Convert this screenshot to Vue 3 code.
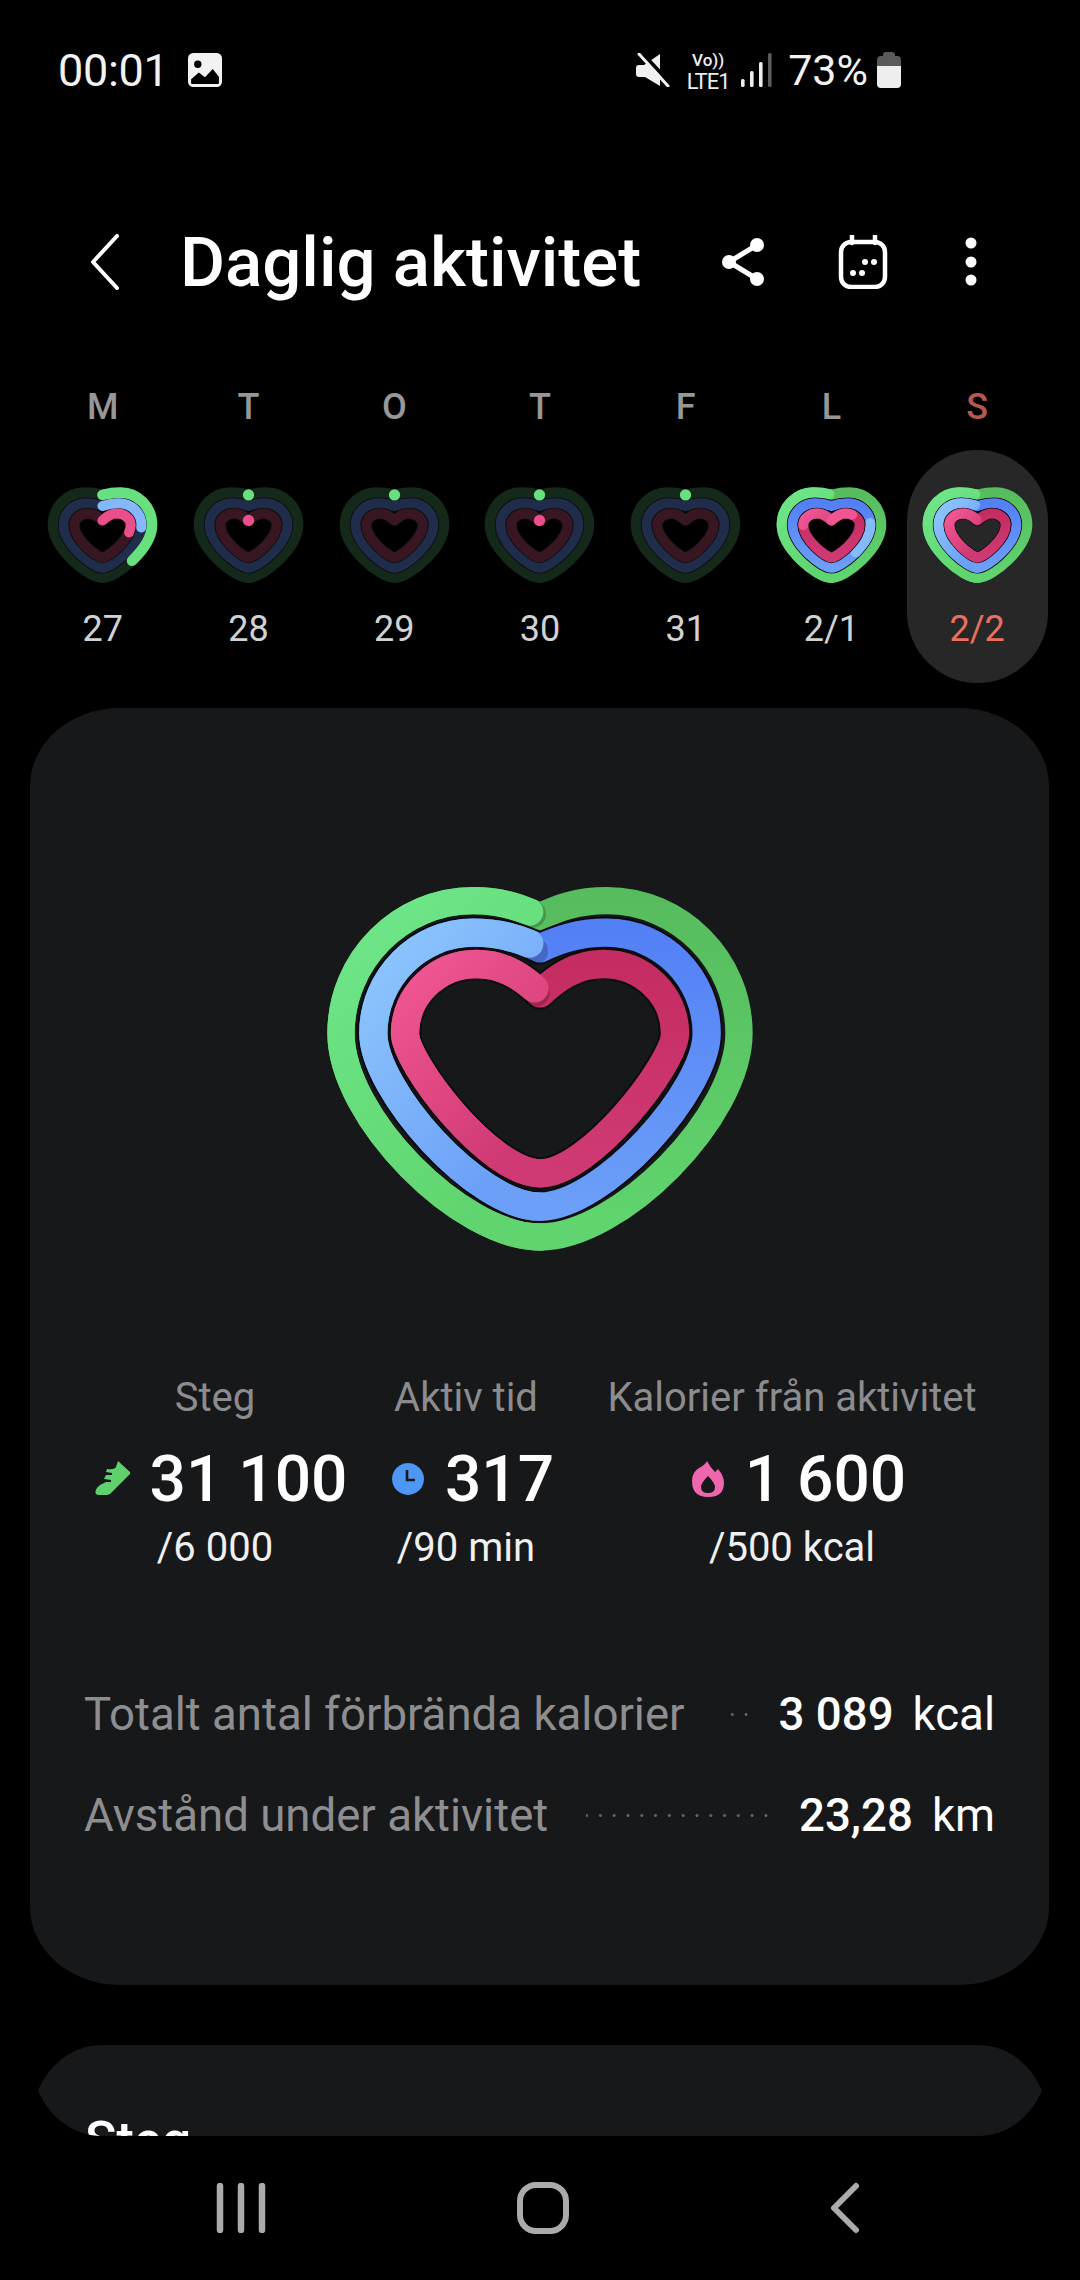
<template>
  <div class="screen">
    <!-- status bar -->
    <div class="status">
      <span class="time">00:01</span>
      <svg class="pic" width="34" height="34" viewBox="9 9 33 33">
        <rect x="9" y="9" width="33" height="33" rx="5" fill="#f2f2f2" />
        <circle cx="18.5" cy="20" r="3.6" fill="#000" />
        <path d="M12 38v-3.500l7.500-6.500 6 4.500 7.500-8 6 7.500V38q0 1-1 1H13q-1 0-1-1z" fill="#000" />
      </svg>
      <div class="status-right">
        <svg width="34" height="34" viewBox="0 0 34 34" class="mute">
          <path d="M0 15q0-3 3-3h5L24 1v32L9 24H3q-3 0-3-3z" fill="#f0f0f0" />
          <path d="M0-1l32 34" stroke="#000" stroke-width="4" transform="translate(3 -2)" />
          <path d="M3 1l29 32" stroke="#f0f0f0" stroke-width="3" stroke-linecap="round" />
        </svg>
        <div class="volte">
          <span class="vo">Vo))</span>
          <span class="lte">LTE1</span>
        </div>
        <svg width="32" height="35" viewBox="0 0 32 35" class="bars">
          <rect x="0" y="26" width="3.600" height="8" rx="1.500" fill="#eee" />
          <rect x="9" y="18" width="3.600" height="16" rx="1.500" fill="#eee" />
          <rect x="18" y="9" width="3.600" height="25" rx="1.500" fill="#eee" />
          <rect x="27" y="0" width="3.600" height="34" rx="1.500" fill="#5c5c5c" />
        </svg>
        <span class="batt-text">73%</span>
        <div class="batt"><span class="batt-nub"></span><span class="batt-empty"></span><span class="batt-full"></span></div>
      </div>
    </div>

    <!-- header -->
    <header class="topbar">
      <svg class="back" width="30" height="56" viewBox="0 0 30 56">
        <path d="M27 2L3 28l24 26" fill="none" stroke="#fff" stroke-width="4" stroke-linecap="round" stroke-linejoin="round" />
      </svg>
      <h1 class="title">Daglig aktivitet</h1>
      <div class="actions">
        <svg width="46" height="50" viewBox="0 0 46 50">
          <path d="M36 8L8 25l28 17" fill="none" stroke="#fff" stroke-width="5" />
          <circle cx="36" cy="8" r="7" fill="#fff" />
          <circle cx="8" cy="25" r="7" fill="#fff" />
          <circle cx="36" cy="42" r="7" fill="#fff" />
        </svg>
        <svg class="cal" width="50" height="54" viewBox="0 0 50 54">
          <rect x="3" y="7" width="44" height="45" rx="10" fill="none" stroke="#fff" stroke-width="4.500" />
          <path d="M14 1v7M37 1v7" stroke="#fff" stroke-width="4.500" fill="none" stroke-linecap="round" />
          <circle cx="15" cy="38" r="3" fill="#fff" />
          <circle cx="24" cy="38" r="3" fill="#fff" />
          <circle cx="27" cy="27" r="3" fill="#fff" />
          <circle cx="36" cy="27" r="3" fill="#fff" />
        </svg>
        <svg class="more" width="14" height="50" viewBox="0 0 14 50">
          <circle cx="7" cy="6" r="5.500" fill="#fff" />
          <circle cx="7" cy="25" r="5.500" fill="#fff" />
          <circle cx="7" cy="43" r="5.500" fill="#fff" />
        </svg>
      </div>
    </header>

    <!-- week -->
    <div class="week">
      <div v-for="d in days" :key="d.date" class="day">
        <span class="letter" :class="{ sun: d.selected }">{{ d.letter }}</span>
        <div class="pill" :class="{ selected: d.selected }">
          <svg class="mini" viewBox="0 0 380 340">
            <path v-for="(l, i) in d.layers" :key="i" v-bind="l" stroke-linecap="round" />
          </svg>
          <span class="date">{{ d.date }}</span>
        </div>
      </div>
    </div>

    <!-- main card -->
    <section class="card">
      <svg class="big" width="480" height="410" viewBox="0 0 1440 1230">
        <defs>
          <linearGradient id="gR" x1="0" y1="0" x2="0" y2="1"><stop offset="0" stop-color="#57bc5d" /><stop offset="1" stop-color="#60d56f" /></linearGradient>
          <linearGradient id="gL" x1="0" y1="0" x2="0.5" y2="1"><stop offset="0" stop-color="#6fe78a" /><stop offset="1" stop-color="#60d56f" /></linearGradient>
          <linearGradient id="bR" x1="0" y1="0" x2="0" y2="1"><stop offset="0" stop-color="#5480f6" /><stop offset="1" stop-color="#6b9ff8" /></linearGradient>
          <linearGradient id="bL" x1="0" y1="0.2" x2="0.6" y2="1"><stop offset="0" stop-color="#8ac2fc" /><stop offset="1" stop-color="#6b9ff8" /></linearGradient>
          <linearGradient id="rR" x1="0" y1="0" x2="0" y2="1"><stop offset="0" stop-color="#c42c62" /><stop offset="1" stop-color="#d03a74" /></linearGradient>
          <linearGradient id="rL" x1="0" y1="0.1" x2="0.6" y2="1"><stop offset="0" stop-color="#ee5592" /><stop offset="1" stop-color="#d03a74" /></linearGradient>
        </defs>
        <path v-for="(l, i) in bigLayers" :key="i" v-bind="l" stroke-linecap="round" />
      </svg>

      <div class="stats">
        <div v-for="s in stats" :key="s.label" class="stat">
          <span class="stat-label">{{ s.label }}</span>
          <div class="stat-value">
            <svg width="36" height="36" viewBox="0 0 36 36" class="stat-icon">
              <path :d="s.icon" :fill="s.color" fill-rule="evenodd" />
              <path v-if="s.hand" :d="s.hand" fill="none" stroke="#17181a" stroke-width="2.600" />
            </svg>
            <span>{{ s.value }}</span>
          </div>
          <span class="stat-goal">{{ s.goal }}</span>
        </div>
      </div>

      <div class="rows">
        <div v-for="r in rows" :key="r.label" class="row">
          <span class="row-label">{{ r.label }}</span>
          <span class="leader"></span>
          <span class="row-num">{{ r.num }}</span>
          <span class="row-unit">{{ r.unit }}</span>
        </div>
      </div>
    </section>

    <section class="card-next">
      <span class="next-title">Steg</span>
    </section>

    <!-- nav bar -->
    <nav class="navbar">
      <svg width="50" height="50" viewBox="0 0 50 50">
        <path d="M4 3v44M25 3v44M46 3v44" stroke="#ababab" stroke-width="6.500" stroke-linecap="round" />
      </svg>
      <svg width="52" height="52" viewBox="0 0 52 52">
        <rect x="3" y="3" width="46" height="46" rx="16" fill="none" stroke="#ababab" stroke-width="6" />
      </svg>
      <svg width="30" height="52" viewBox="0 0 30 52">
        <path d="M26 4L4 26l22 22" fill="none" stroke="#ababab" stroke-width="6" stroke-linecap="round" stroke-linejoin="round" />
      </svg>
    </nav>
  </div>
</template>

<script setup>
// ring centre lines. The small hearts have relatively thicker bands, so they get their own set.
const BIG = {
  cx: 720,
  outline: 12,
  green: { w: 597, top: 122, bot: 1131, notch: 170, lobe: 200, mid: 520, a: 250, b: 240, width: 82 },
  blue: { w: 500, top: 218, bot: 1040, notch: 265, lobe: 200, mid: 520, a: 170, b: 190, width: 85 },
  red: { w: 405, top: 312, bot: 940, notch: 400, lobe: 190, mid: 520, a: 90, b: 150, width: 85 },
}
const SMALL = {
  cx: 190,
  outline: 5,
  green: { w: 149, top: 68, bot: 324, notch: 75, lobe: 55, mid: 165, a: 70, b: 45, width: 32 },
  blue: { w: 117, top: 100, bot: 294, notch: 108, lobe: 50, mid: 165, a: 58, b: 30, width: 30 },
  red: { w: 85, top: 131, bot: 263, notch: 152, lobe: 43, mid: 165, a: 46, b: 16, width: 30 },
}

function cubicPoints(r, cx) {
  const right = cx + r.w
  const lobeX = cx + r.lobe
  const k = 0.55
  return [
    [cx, r.notch],
    [cx + r.lobe * 0.25, r.notch - (r.notch - r.top) * 0.5],
    [cx + r.lobe * 0.55, r.top],
    [lobeX, r.top],
    [lobeX + (right - lobeX) * k, r.top],
    [right, r.mid - (r.mid - r.top) * k],
    [right, r.mid],
    [right, r.mid + r.a],
    [cx + r.b, r.bot],
    [cx, r.bot],
  ]
}

function toPath(pts) {
  let d = `M${pts[0][0]} ${pts[0][1]}`
  for (let i = 1; i < pts.length; i += 3) {
    d += `C${pts[i]} ${pts[i + 1]} ${pts[i + 2]}`
  }
  return d
}

function ringPaths(set, name) {
  const pts = cubicPoints(set[name], set.cx)
  const left = pts.map(([x, y]) => [2 * set.cx - x, y]).reverse()
  const rightD = toPath(pts)
  const leftD = toPath(left)
  return { left: leftD, full: rightD + leftD.replace(/^M[^C]+/, ''), width: set[name].width }
}

function makeSet(set) {
  return {
    outline: set.outline,
    green: ringPaths(set, 'green'),
    blue: ringPaths(set, 'blue'),
    red: ringPaths(set, 'red'),
  }
}

const bigSet = makeSet(BIG)
const smallSet = makeSet(SMALL)

function stroke(d, color, width, extra = {}) {
  return { d, stroke: color, 'stroke-width': width, fill: 'none', ...extra }
}

// dash along a path, measured with pathLength 100
function arc(ring, color, from, to, d = ring.full) {
  return stroke(d, color, ring.width, {
    pathLength: 100,
    'stroke-dasharray': `${to - from} 300`,
    'stroke-dashoffset': -from,
  })
}

function base(s, colors, bg) {
  return [
    stroke(s.green.full, colors[0], s.green.width),
    stroke(s.blue.full, '#0d0d10', s.blue.width + s.outline),
    stroke(s.blue.full, colors[1], s.blue.width),
    stroke(s.red.full, '#0d0d10', s.red.width + s.outline, { fill: bg }),
    stroke(s.red.full, colors[2], s.red.width),
  ]
}

const DIM = ['#14291a', '#1f2c4a', '#381722']
const FULL = ['url(#gR)', 'url(#bR)', 'url(#rR)']

function dot(x, y, color, r) {
  return { d: `M${x} ${y}h0.01`, stroke: color, 'stroke-width': r * 2, fill: 'none' }
}

// soft darkening under the round head of a ring
function headShadow(x, y, r) {
  return { ...dot(x + 7, y + 5, '#000', r), 'stroke-opacity': 0.2 }
}

function fullLayers(s, bg, shadows = []) {
  const l = base(s, FULL, bg)
  return [
    l[0],
    ...shadows.slice(0, 1),
    arc(s.green, 'url(#gL)', 0, 98, s.green.left),
    l[1], l[2],
    ...shadows.slice(1, 2),
    arc(s.blue, 'url(#bL)', 0, 97.5, s.blue.left),
    l[3], l[4],
    ...shadows.slice(2, 3),
    arc(s.red, 'url(#rL)', 0, 98, s.red.left),
  ]
}

function saturdayLayers() {
  const s = smallSet
  const l = base(s, FULL, '#000')
  return [
    l[0],
    arc(s.green, 'url(#gL)', 0, 98, s.green.left),
    l[1], l[2],
    arc(s.blue, '#85bbfb', 22, 37),
    l[3], l[4],
    arc(s.red, 'url(#rL)', 55, 100, s.red.left),
    arc(s.red, '#ee5592', 0, 14),
  ]
}

const dim = () => base(smallSet, DIM, '#000')
const greenDot = dot(190, 75, '#68e07f', 17)
const redDot = dot(190, 152, '#ea4f8c', 17)

const mondayLayers = [
  ...dim(),
  arc(smallSet.green, '#68e07f', 0, 38),
  arc(smallSet.blue, '#84b8fb', 0, 24),
  arc(smallSet.red, '#ea4f8c', 0, 27),
]

const days = [
  { letter: 'M', date: '27', layers: mondayLayers },
  { letter: 'T', date: '28', layers: [...dim(), greenDot, redDot] },
  { letter: 'O', date: '29', layers: [...dim(), greenDot] },
  { letter: 'T', date: '30', layers: [...dim(), greenDot, redDot] },
  { letter: 'F', date: '31', layers: [...dim(), greenDot] },
  { letter: 'L', date: '2/1', layers: saturdayLayers() },
  { letter: 'S', date: '2/2', layers: fullLayers(smallSet, '#272728'), selected: true },
]

const bigLayers = fullLayers(bigSet, '#17181a', [
  headShadow(690, 157, 41),
  headShadow(695, 268, 42),
  headShadow(700, 393, 42),
])

const stats = [
  {
    label: 'Steg',
    value: '31 100',
    goal: '/6 000',
    color: '#5fd06e',
    icon: 'M23 0l12 11q1 2-1 3L17 31q-2 3-5 3H4q-4 0-3.500-4 .5-3 4.500-6l6-3h5v-2l-7-1 2-4h6v-2l-6-1 1-3q7 1 9-2z',
  },
  {
    label: 'Aktiv tid',
    value: '317',
    goal: '/90 min',
    color: '#4f97f5',
    icon: 'M18 2a16 16 0 1 0 .01 0z',
    hand: 'M17 9v10h8',
  },
  {
    label: 'Kalorier från aktivitet',
    value: '1 600',
    goal: '/500 kcal',
    color: '#ef66ae',
    icon: 'M17 0q3 6 8 11l3-3q6 7 6 14 0 14-16 14T2 20Q2 11 9 7q6-3 8-7zM18 15q-7 7-7 11 0 6 7 6t7-6q0-4-7-11z',
  },
]

const rows = [
  { label: 'Totalt antal förbrända kalorier', num: '3 089', unit: 'kcal' },
  { label: 'Avstånd under aktivitet', num: '23,28', unit: 'km' },
]
</script>

<style>
html, body { background: #000; }
</style>

<style scoped>
.screen {
  width: 1080px;
  height: 2280px;
  background: #000;
  overflow: hidden;
  font-family: Roboto, "Noto Sans", sans-serif;
  color: #fff;
}

/* status bar */
.status {
  height: 140px;
  display: flex;
  align-items: center;
  padding: 0 179px 0 58px;
}
.time { font-size: 45px; color: #f2f2f2; letter-spacing: -0.3px; }
.pic { margin-left: 19px; }
.status-right { margin-left: auto; display: flex; align-items: center; }
.volte { display: flex; flex-direction: column; align-items: center; margin-left: 16px; width: 44px; line-height: 1; }
.vo { font-size: 17px; font-weight: 500; color: #eee; height: 19px; white-space: nowrap; }
.lte { font-size: 22px; color: #eee; height: 18px; letter-spacing: -1px; white-space: nowrap; }
.bars { margin-left: 11px; }
.batt-text { font-size: 43px; color: #f2f2f2; margin-left: 15px; }
.batt { width: 24px; height: 36px; display: flex; flex-direction: column; align-items: center; margin-left: 9px; }
.batt-nub { width: 12px; height: 4px; background: #5a5a5a; border-radius: 3px 3px 0 0; }
.batt-empty { width: 24px; height: 10px; background: #5a5a5a; border-radius: 4px 4px 0 0; }
.batt-full { width: 24px; height: 22px; background: #eee; border-radius: 0 0 4px 4px; }

/* header */
.topbar {
  height: 124px;
  margin-top: 60px;
  display: flex;
  align-items: center;
  padding-left: 90px;
}
.title { margin: 0 0 0 60px; font-size: 69px; font-weight: 500; line-height: 1; white-space: nowrap; }
.actions { display: flex; align-items: center; margin-left: 80px; }
.cal { margin-left: 71px; }
.more { margin-left: 76px; }

/* week */
.week {
  display: grid;
  grid-template-columns: repeat(7, 1fr);
  padding: 0 30px;
  margin-top: 61px;
}
.day { display: flex; flex-direction: column; align-items: center; }
.letter { height: 44px; line-height: 44px; font-size: 36px; font-weight: 500; color: #979797; margin-bottom: 21px; }
.letter.sun { color: #b5584f; }
.pill { width: 141px; height: 233px; border-radius: 71px; padding-top: 20px; box-sizing: border-box; display: flex; flex-direction: column; align-items: center; }
.pill.selected { background: #272728; }
.mini { width: 127px; height: 113px; display: block; flex: none; }
.date { margin-top: 24px; font-size: 36px; line-height: 44px; color: #d2d2d2; }
.selected .date { color: #ea6f5f; }

/* card */
.card {
  margin: 25px 31px 0 30px;
  height: 1277px;
  background: #17181a;
  border-radius: 90px / 78px;
  display: flex;
  flex-direction: column;
  box-sizing: border-box;
  padding-top: 152px;
}
.big { align-self: center; display: block; }

.stats {
  display: grid;
  grid-template-columns: 260px 242px 410px;
  margin: 106px 0 0 55px;
}
.stat { display: flex; flex-direction: column; align-items: center; }
.stat-label { font-size: 40px; line-height: 44px; color: #8c8c8e; white-space: nowrap; }
.stat-value { display: flex; align-items: center; margin-top: 23px; padding-left: 12px; height: 72px; font-size: 64px; font-weight: 500; white-space: nowrap; }
.stat-icon { margin-right: 19px; }
.stat-goal { margin-top: 9px; font-size: 40px; line-height: 48px; color: #f0f0f0; white-space: nowrap; }

.rows { margin: 114px 0 0; padding: 0 54px; display: flex; flex-direction: column; gap: 45px; }
.row { display: flex; align-items: center; height: 56px; white-space: nowrap; font-size: 45.6px; }
.row-label { color: #8e8e90; }
.leader {
  flex: 1;
  height: 3px;
  margin: 0 26px 0 38px;
  background-image: radial-gradient(circle, #636365 1.4px, transparent 1.6px);
  background-size: 13.800px 3px;
  background-position: right center;
  background-repeat: repeat-x;
}
.row-num { font-weight: 500; }
.row-unit { margin-left: 19px; }

/* next card, cut off by the nav bar */
.card-next {
  margin: 60px 38px 0;
  height: 91px;
  background: #17181a;
  clip-path: path('M65 0H939C975 0 995 25 1004 45.500C995 66 975 91 939 91H65C29 91 9 66 0 45.500C9 25 29 0 65 0Z');
  overflow: hidden;
  box-sizing: border-box;
  padding: 66px 0 0 47px;
}
.next-title { display: block; font-size: 52px; font-weight: 500; line-height: 60px; }

.navbar {
  height: 144px;
  display: grid;
  grid-template-columns: repeat(3, 302px);
  justify-items: center;
  align-items: center;
  padding: 0 84px 0 90px;
}
</style>
